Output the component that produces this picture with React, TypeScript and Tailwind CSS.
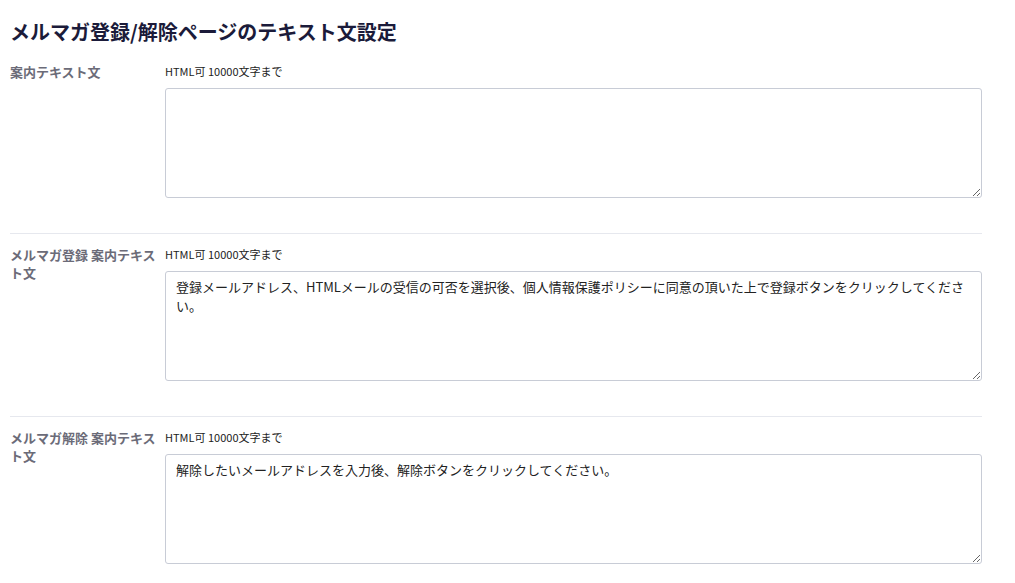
import React from "react";

const sections = [
  { label: "案内テキスト文", value: "" },
  {
    label: "メルマガ登録 案内テキスト文",
    value:
      "登録メールアドレス、HTMLメールの受信の可否を選択後、個人情報保護ポリシーに同意の頂いた上で登録ボタンをクリックしてください。",
  },
  {
    label: "メルマガ解除 案内テキスト文",
    value: "解除したいメールアドレスを入力後、解除ボタンをクリックしてください。",
  },
];

export default function App() {
  return (
    <div
      className="min-h-[583px] w-[1015px] bg-white pl-[10px] pt-[18px] text-[#222]"
      style={{ fontFamily: '"Noto Sans CJK JP", "Noto Sans", sans-serif' }}
    >
      <h1 className="mb-[5px] text-[20px] font-bold leading-[28px] text-[#1b1b3a]">
        メルマガ登録/解除ページのテキスト文設定
      </h1>
      <div className="w-[972px]">
        {sections.map((s, i) => (
          <div
            key={i}
            className={`flex pb-[35px] pt-[12px] ${i > 0 ? "border-t border-[#e6e8ee]" : ""}`}
          >
            <div className="w-[155px] shrink-0 pr-[6px] text-[13px] font-bold leading-[18px] text-[#6b6b78]">
              {s.label}
            </div>
            <div className="flex-1">
              <div className="mb-[9px] text-[11px] leading-[16px] text-[#222]">
                HTML可 10000文字まで
              </div>
              <textarea
                defaultValue={s.value}
                className="block h-[110px] w-full rounded-[3px] border border-[#c8ccd6] px-[10px] py-[5px] text-[13px] leading-[19px] text-[#222] outline-none"
                style={{ fontFamily: '"Noto Sans CJK JP", "Noto Sans", sans-serif' }}
              />
            </div>
          </div>
        ))}
      </div>
    </div>
  );
}
